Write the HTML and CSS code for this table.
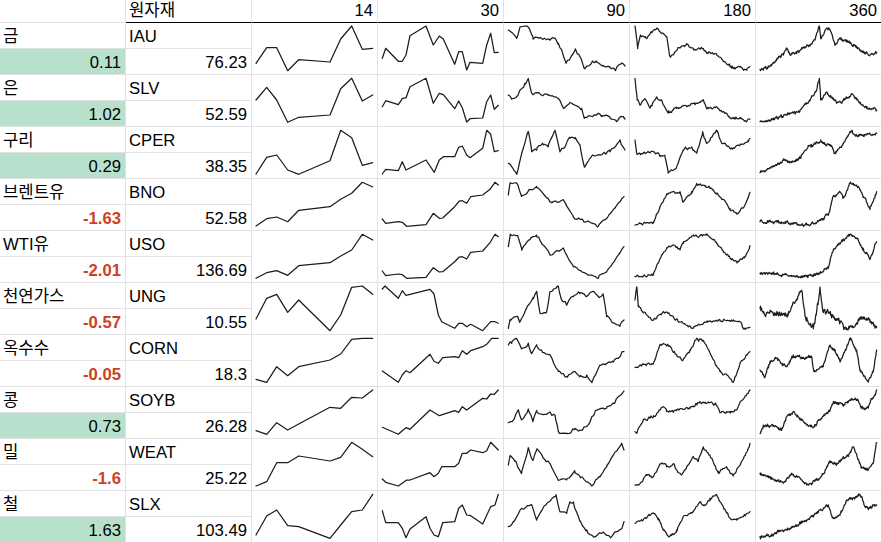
FILE: index.html
```html
<!DOCTYPE html>
<html lang="ko">
<head>
<meta charset="utf-8">
<title>원자재</title>
<link rel="stylesheet" href="styles.css">
</head>
<body>
<div class="sheet">
  <div class="cell hd"></div>
  <div class="cell hd top">원자재</div>
  <div class="cell hd top num">14</div>
  <div class="cell hd top num">30</div>
  <div class="cell hd top num">90</div>
  <div class="cell hd top num">180</div>
  <div class="cell hd top num end">360</div>

  <div class="cell">금</div>
  <div class="cell">IAU</div>
  <div class="cell spark"><svg viewBox="0 0 125 51"><polyline points="4,40.3 14.7,24.7 24.7,24.7 35.7,47.7 46.7,36.7 78,39 88.7,16 99.7,3 110.3,26.3 120.7,25.3"/></svg></div>
  <div class="cell spark"><svg viewBox="0 0 125 51"><polyline points="4.3,35.3 7.7,25.3 20.3,38.3 24.3,38.3 28,32 32,12.7 48,3 55.3,22 61.3,13 65.3,16 76.7,41.3 80.7,28.7 84.3,28.7 88.7,47 92,39.3 104.7,40.3 108.7,22 112.7,10.3 116.3,29.7 120.3,29.3"/></svg></div>
  <div class="cell spark"><svg viewBox="0 0 125 51"><polyline data-n="62" data-key="4.3,7 7.7,9.7 12.7,15.3 16,4.3 21,3 25.3,5.3 28.7,13.7 33,14.3 46,17 51,15.3 54.3,20.3 57.7,27 62,40.3 71,27 76,33.7 80.3,45.3 86,42 92.7,38.7 99.3,42 106,45 111,47 117.7,39.7 121,43"/></svg></div>
  <div class="cell spark"><svg viewBox="0 0 125 51"><polyline data-n="124" data-key="5,3 7.7,25.3 10,13.7 16.7,15.3 21.7,8.7 26.7,5.3 31.7,10.3 36.7,13.7 40,33.7 46.7,27 56.7,20.3 65,27 73.3,25.3 76.7,30.3 86.7,32 93.3,38.7 101.7,45.3 110,43.7 116.7,47 120,43.7"/></svg></div>
  <div class="cell spark end"><svg viewBox="0 0 125 51"><polyline data-n="250" data-key="4,46.3 10.7,45.3 20.7,37 27.3,30.3 30.7,25.3 34,32 40.7,28.7 54,22 59,17 63.3,3 64.7,15.3 70.7,5.3 74,7 79,22 84,15.3 94,20.3 100.7,23.7 107.3,28.7 114,32 120.7,29.7"/></svg></div>
  <div class="cell num up">0.11</div>
  <div class="cell num">76.23</div>

  <div class="cell">은</div>
  <div class="cell">SLV</div>
  <div class="cell spark"><svg viewBox="0 0 125 51"><polyline points="4,25 14.7,12.3 24.7,25 35.7,47.3 46.7,42.3 78,40 88.7,13.7 99.7,3.3 110.3,26 120.7,20"/></svg></div>
  <div class="cell spark"><svg viewBox="0 0 125 51"><polyline points="4.3,31.7 7.7,25.7 20.3,29.7 24.3,23.7 28,22.7 32,11.7 48,3.3 55.3,28.3 61.3,18.3 65.3,19.7 76.7,33.7 80.7,26 84.3,32.7 88.7,47 92,43.7 104.7,43 108.7,26.7 112.7,20 116.3,34.3 120.3,30.3"/></svg></div>
  <div class="cell spark"><svg viewBox="0 0 125 51"><polyline data-n="62" data-key="4.3,20 7.7,24.3 12.7,21.7 16,15 21,8.3 24.3,3.3 27.7,18.3 34.3,17.7 44.3,20 54.3,23.3 59.3,33.3 66,27.7 77.7,33.3 80.3,43.3 92.7,40 97.7,41.7 106,43.3 112.7,46.7 117.7,41.7 121,44"/></svg></div>
  <div class="cell spark"><svg viewBox="0 0 125 51"><polyline data-n="124" data-key="5,3.3 7.3,25 10,30 15,23.3 20,33.3 26.7,21.7 31.7,25 38.3,38.3 46.7,33.3 56.7,31.7 65,30 73.3,25 76.7,33.3 86.7,31.7 93.3,36.7 101.7,43.3 110,43.3 116.7,46.7 120,44.3"/></svg></div>
  <div class="cell spark end"><svg viewBox="0 0 125 51"><polyline data-n="250" data-key="4,46.7 17.3,44.3 30.7,40 44,35 54,25 60.7,15 63.3,3.3 64.7,25 70.7,16.7 74,21.7 80.7,28.3 87.3,25 97.3,20 104,28.3 110.7,33.3 120.7,35"/></svg></div>
  <div class="cell num up">1.02</div>
  <div class="cell num">52.59</div>

  <div class="cell">구리</div>
  <div class="cell">CPER</div>
  <div class="cell spark"><svg viewBox="0 0 125 51"><polyline points="4,47 14.7,30.3 24.7,28 35.7,43 46.7,47.3 78,33.7 88.7,3.3 99.7,10.7 110.3,38.3 120.7,35.7"/></svg></div>
  <div class="cell spark"><svg viewBox="0 0 125 51"><polyline points="4.3,47 7.7,42.3 20.3,43.7 24.3,34.7 28,43 48,33 56.3,45.3 61.3,33 65.3,29.7 76.7,29.7 80.7,20.3 84.3,19 88.7,28 92,30.7 104.7,21.3 108.7,3.3 112.7,7.3 116.3,24.7 120.3,23.7"/></svg></div>
  <div class="cell spark"><svg viewBox="0 0 125 51"><polyline data-n="62" data-key="4.3,36.3 7.7,39.7 12.7,47 17.7,26.3 24.3,4.7 27.7,24.7 32.7,23 39.3,18 44.3,19.7 51,3 56,24.7 61,19.7 66,11.3 71,11.3 76,18 80.3,39.7 86,31.3 96,28 106,24.7 116,13 121,23"/></svg></div>
  <div class="cell spark"><svg viewBox="0 0 125 51"><polyline data-n="124" data-key="5,13 6.7,26.3 13.3,26.3 23.3,24.7 30,29.7 35,29.7 38.3,46.3 46.7,39.7 53.3,23 61.7,19.7 66.7,26.3 72.7,4.7 76.7,16.3 86.7,4.7 91.7,16.3 100,21.3 110,18 118.3,14.7 120,11.3"/></svg></div>
  <div class="cell spark end"><svg viewBox="0 0 125 51"><polyline data-n="250" data-key="4,45.7 10.7,43 20.7,38 27.3,33 37.3,34.7 45.7,28 54,18 64,14.7 74,18 79,26.3 87.3,16.3 95.3,4.7 102,9.7 110.3,8 120.7,6.3"/></svg></div>
  <div class="cell num up">0.29</div>
  <div class="cell num">38.35</div>

  <div class="cell">브렌트유</div>
  <div class="cell">BNO</div>
  <div class="cell spark"><svg viewBox="0 0 125 51"><polyline points="4,47 14.7,39.7 24.7,38 35.7,42.7 46.7,31.3 78,27.7 88.7,20.3 99.7,14.3 110.3,3.3 120.7,8"/></svg></div>
  <div class="cell spark"><svg viewBox="0 0 125 51"><polyline points="4.3,40 7.7,44.3 20.3,42.7 24.3,43.3 28.7,47.3 48,45.7 55.3,34.3 61.3,39.3 64.7,39 76.7,27.7 81.3,22 84.3,21.7 88.7,24.3 92.7,17.7 104.7,16 112,10.3 117,3.3 120.3,6"/></svg></div>
  <div class="cell spark"><svg viewBox="0 0 125 51"><polyline data-n="62" data-key="4.3,16 6,4.3 12.7,3.7 17.7,17 26,11 32.7,7.7 46,22.7 59.3,21 69.3,37.7 82.7,42.7 94.3,47 102.7,39.3 111,29.3 120,17.7"/></svg></div>
  <div class="cell spark"><svg viewBox="0 0 125 51"><polyline data-n="124" data-key="5,46 23.3,42.7 31.7,24.3 36.7,16 43.3,12.7 50,12.7 53.3,22.7 61.7,12.7 66.7,4.3 73.3,6 80,9.3 86.7,14.3 100,29.3 106.7,33.7 115,26 120,13.3"/></svg></div>
  <div class="cell spark end"><svg viewBox="0 0 125 51"><polyline data-n="250" data-key="4,42.7 20.7,42.7 37.3,45.3 50.7,46 64,41 72.3,36 77.3,17.7 84,12.7 87.3,19 94,3.7 102.3,7.7 107.3,17.7 114,30.3 120.7,12.7"/></svg></div>
  <div class="cell num down">-1.63</div>
  <div class="cell num">52.58</div>

  <div class="cell">WTI유</div>
  <div class="cell">USO</div>
  <div class="cell spark"><svg viewBox="0 0 125 51"><polyline points="4,47.3 14.7,41.7 24.7,39.7 35.7,44.3 46.7,34.7 78,31.7 88.7,25 99.7,19 110.3,3.3 120.7,9"/></svg></div>
  <div class="cell spark"><svg viewBox="0 0 125 51"><polyline points="4.3,40 7.7,44.7 20.3,43 24.3,43.7 28.7,47.3 48,46.3 55.3,36.7 61.3,41 64.7,40.7 76.7,30.7 81.3,26 84.3,25.7 88.7,28 92.7,21.3 104.7,20 112,11.7 117,3.3 120.3,5.7"/></svg></div>
  <div class="cell spark"><svg viewBox="0 0 125 51"><polyline data-n="62" data-key="4.3,15.7 6,5.7 14.3,6.3 17.7,19 26,9 32.7,4 46,24 59.3,17.3 69.3,35.7 82.7,43 94.3,46.7 102.7,40.7 111,29 120,15.7"/></svg></div>
  <div class="cell spark"><svg viewBox="0 0 125 51"><polyline data-n="124" data-key="5,45.7 23.3,44 31.7,24 36.7,17.3 43.3,14 50,19 53.3,12.3 63.3,4 76.7,4 86.7,12.3 100,27.3 106.7,30.7 115,25.7 120,14.7"/></svg></div>
  <div class="cell spark end"><svg viewBox="0 0 125 51"><polyline data-n="250" data-key="4,42.3 20.7,43.3 37.3,44.7 50.7,45.7 64,41.7 72.3,37.3 77.3,19 84,12.3 94,4 102.3,9 107.3,17.3 114,28.3 120.7,10.7"/></svg></div>
  <div class="cell num down">-2.01</div>
  <div class="cell num">136.69</div>

  <div class="cell">천연가스</div>
  <div class="cell">UNG</div>
  <div class="cell spark"><svg viewBox="0 0 125 51"><polyline points="4,36 14.7,15.3 24.7,11.3 35.7,29.3 46.7,17 78,47.7 88.7,32 99.7,4.3 110.3,3 120.7,11.3"/></svg></div>
  <div class="cell spark"><svg viewBox="0 0 125 51"><polyline points="4.3,6 7,3 20.3,15.3 24.3,7.7 28,12.3 52,6.3 56,11 60.3,32 63.7,38.7 76.7,45.3 80.7,40.3 84.3,40.3 88.7,43.7 92.7,41.3 104.7,47.7 112.7,38.7 117,38.7 120.3,40.3"/></svg></div>
  <div class="cell spark"><svg viewBox="0 0 125 51"><polyline data-n="62" data-key="4.3,45.3 6,37 12.7,33.7 16,38.7 22.7,25.3 29.3,15.3 32.7,8.7 36,30.3 42.7,28.7 46,8.7 54.3,3.7 57.7,17 62.7,22 69.3,13.7 76,10.3 82.7,13.7 87.7,8.7 96,13.7 99.3,12 102.7,33.7 107.7,38.7 116,43.7 120,37"/></svg></div>
  <div class="cell spark"><svg viewBox="0 0 125 51"><polyline data-n="124" data-key="5,17 6.7,3.7 8.3,23.7 13.3,30.3 23.3,37 33.3,28.7 43.3,33.7 53.3,40.3 63.3,45.3 76.7,38.7 90,37 103.3,37 110,38.7 113.3,45.3 120,44.3"/></svg></div>
  <div class="cell spark end"><svg viewBox="0 0 125 51"><polyline data-n="250" data-amp="2.4" data-key="4,25.3 10.7,30.3 20.7,28.7 30.7,32 40.7,17 45.7,7 49,33.7 57.3,45.3 62.3,18.7 64,3.7 66.7,27 77.3,33.7 90.7,45.3 104,37 114,37 119,45.3 120.7,44.3"/></svg></div>
  <div class="cell num down">-0.57</div>
  <div class="cell num">10.55</div>

  <div class="cell">옥수수</div>
  <div class="cell">CORN</div>
  <div class="cell spark"><svg viewBox="0 0 125 51"><polyline points="4,44.3 14.7,47.3 24.7,31.7 35.7,40.7 46.7,31.7 78,25 88.7,19 99.7,4.3 110.3,3.3 120.7,3.3"/></svg></div>
  <div class="cell spark"><svg viewBox="0 0 125 51"><polyline points="4.3,36 20.3,47.3 24.3,40 28,35.7 32,37.7 52,19.3 56,26.3 60.3,28.3 64.7,22.7 76.7,21.7 80.7,22.7 84.3,15.7 88.7,19.3 92.7,15.7 104.7,11.7 108.7,9.3 113.7,3.3 120.3,3.3"/></svg></div>
  <div class="cell spark"><svg viewBox="0 0 125 51"><polyline data-n="62" data-key="4.3,10 7.7,8.3 12.7,3.3 17.7,13.3 24.3,8.3 27.7,18.3 32.7,10 37.7,15 46,20 54.3,36.7 62.7,41.7 71,36.7 76,41.7 82.7,40 87.7,46.7 96,30 109.3,26.7 120,16.7"/></svg></div>
  <div class="cell spark"><svg viewBox="0 0 125 51"><polyline data-n="124" data-key="5,32.3 16.7,29 23.3,28.3 29.3,11.7 33.3,8.3 40,11.7 46.7,20 52.7,25.7 60,15 66.7,3.3 73.3,5 80,18.3 90,36.7 96.7,40 103.3,46.7 110,28.3 120,16.7"/></svg></div>
  <div class="cell spark end"><svg viewBox="0 0 125 51"><polyline data-n="250" data-key="4,35 9,41.7 14,26.7 20.7,23.3 30.7,31.7 37.3,20 47.3,23.3 55.7,21.7 58,36.7 67.3,31.7 74,10 79,15 84,26.7 94,3.3 100.7,15 104,35 112.3,46.7 117.3,35 120.7,15"/></svg></div>
  <div class="cell num down">-0.05</div>
  <div class="cell num">18.3</div>

  <div class="cell">콩</div>
  <div class="cell">SOYB</div>
  <div class="cell spark"><svg viewBox="0 0 125 51"><polyline points="4,43.7 14.7,47.3 24.7,35.7 35.7,43 46.7,37 78,20.3 88.7,21.3 99.7,10.3 110.3,11 120.7,3"/></svg></div>
  <div class="cell spark"><svg viewBox="0 0 125 51"><polyline points="4.3,40.3 20.3,47.3 24.3,43.7 28,40.7 32,42.3 52,23 61.3,28.7 76.7,23.7 80.7,25.3 84.3,19.7 88.7,23 104.7,11.3 108.7,12 112.7,7 116.3,7.3 120.3,3"/></svg></div>
  <div class="cell spark"><svg viewBox="0 0 125 51"><polyline data-n="62" data-key="4.3,35.7 9.3,33 14.3,23 17.7,33 24.3,22 29.3,33 32.7,23 39.3,28 46,24.7 51,28 54.3,44.7 62.7,46.3 71,41.3 76,43 82.7,39.7 92.7,23 102.7,21.3 109.3,16.3 120,4"/></svg></div>
  <div class="cell spark"><svg viewBox="0 0 125 51"><polyline data-n="124" data-key="5,44.7 6.7,46.3 13.3,33 23.3,29.7 33.3,19.7 36.7,24.7 46.7,23 60,21.3 70,14.7 78.3,14.7 86.7,18 90,25.7 100,24.7 106.7,23 110,14.7 120,3"/></svg></div>
  <div class="cell spark end"><svg viewBox="0 0 125 51"><polyline data-n="250" data-key="4,46.3 7.3,38 17.3,38 25.7,43 30.7,29.7 37.3,24.7 44,31.3 50.7,38 57.3,39.7 64,33 74,23 77.3,14.7 87.3,18 95.3,11.3 102,13 105.3,21.3 112,19.7 120.7,3"/></svg></div>
  <div class="cell num up">0.73</div>
  <div class="cell num">26.28</div>

  <div class="cell">밀</div>
  <div class="cell">WEAT</div>
  <div class="cell spark"><svg viewBox="0 0 125 51"><polyline points="4,47 14.7,42.7 24.7,23.7 35.7,23.7 46.7,17 78,22 88.7,18.3 99.7,3.3 110.3,10.3 120.7,17.7"/></svg></div>
  <div class="cell spark"><svg viewBox="0 0 125 51"><polyline points="4.3,40 7.7,43.3 20.3,47 28.7,41 32,41 52,33.7 56,37.7 60.3,34.3 63.7,27.7 76.7,27.7 80.7,24.3 84.3,14.3 88.7,14.3 92.7,11 104.7,13.7 108.7,11.7 112.7,3.3 120.3,11"/></svg></div>
  <div class="cell spark"><svg viewBox="0 0 125 51"><polyline data-n="62" data-key="4.3,26 6,17 11,22.7 17.7,32.7 24.3,8.3 28.3,21 32.7,11 39.3,19.3 46,24.3 54.3,41 62.7,41 71,33.7 76,37.7 87.7,47 96,37.7 102.7,27.7 111,12.7 117.7,4.3 120,11"/></svg></div>
  <div class="cell spark"><svg viewBox="0 0 125 51"><polyline data-n="124" data-key="5,46 10,44.3 16.7,36 23.3,37.7 30,24.3 36.7,27.7 43.3,24.3 51.7,36 56.7,27.7 63.3,17.7 68.3,22.7 73.3,7.7 80,16 88.3,32.7 96.7,27.7 103.3,36 110,26 118.3,9.3 120,4.3"/></svg></div>
  <div class="cell spark end"><svg viewBox="0 0 125 51"><polyline data-n="250" data-key="4,34.3 14,37.7 27.3,44.3 35.7,34.3 44,39.3 50.7,46 64,39.3 74,22.7 80.7,24.3 87.3,19.3 92.3,17.7 97.3,7.7 105.3,27.7 112.3,31 117.3,24.3 120.7,3.7"/></svg></div>
  <div class="cell num down">-1.6</div>
  <div class="cell num">25.22</div>

  <div class="cell">철</div>
  <div class="cell">SLX</div>
  <div class="cell spark"><svg viewBox="0 0 125 51"><polyline points="4,44 14.7,25 24.7,19 35.7,34.7 46.7,35.7 78,47.3 88.7,34 99.7,20.7 110.3,19 120.7,3.3"/></svg></div>
  <div class="cell spark"><svg viewBox="0 0 125 51"><polyline points="4.3,19.7 7.7,31.7 20.3,31.7 24.3,37.3 28,46.7 32,38 48,25.7 52,37.3 56,44 60.3,45.7 64.7,31.7 76.7,30.7 80.7,17.3 84.3,14 88.7,24 92.7,24.7 104.7,33 112.7,15.7 117,14 120.3,3.3"/></svg></div>
  <div class="cell spark"><svg viewBox="0 0 125 51"><polyline data-n="62" data-key="4.3,35.7 9.3,30.7 16,19 22.7,15.7 27.7,14 32.7,29 42.7,12.3 52,3.3 56,20.7 62.7,22.3 66,10.7 69.3,10.7 76,30.7 82.7,39 89.3,45.7 99.3,40.7 106,45.7 117.7,37.3 120,30.7"/></svg></div>
  <div class="cell spark"><svg viewBox="0 0 125 51"><polyline data-n="124" data-key="5,32.3 13.3,29 23.3,22.3 28.3,29 33.3,39 40,45.7 46.7,39 53.3,25.7 63.3,20.7 70,10.7 75,14 80,7.3 86.7,4 93.3,15.7 100,27.3 106.7,29 120,20.7"/></svg></div>
  <div class="cell spark end"><svg viewBox="0 0 125 51"><polyline data-n="250" data-key="4,45.7 20.7,42.3 37.3,35.7 50.7,29 64,19 72.3,14 77.3,27.3 84,24 90.7,9 97.3,7.3 104,4 109,15.7 114,17.3 120.7,14"/></svg></div>
  <div class="cell num up">1.63</div>
  <div class="cell num">103.49</div>
</div>
<script src="script.js"></script>
</body>
</html>
```

FILE: styles.css
```css
html, body {
  margin: 0;
  padding: 0;
  background: #ffffff;
}

body {
  font-family: "Liberation Sans", "Noto Sans CJK KR", Arial, sans-serif;
  font-size: 16.7px;
  color: #000000;
}

.sheet {
  display: grid;
  grid-template-columns: repeat(6, 126px) 125px;
  grid-template-rows: 23px;
  grid-auto-rows: 26px;
  width: 881px;
  height: 542px;
  overflow: hidden;
}

.cell {
  box-sizing: border-box;
  border-right: 1px solid #e2e2e2;
  border-bottom: 1px solid #e2e2e2;
  display: flex;
  align-items: flex-end;
  padding: 0 3px 2px 3px;
  line-height: 19px;
  white-space: nowrap;
  overflow: hidden;
}

.cell.end {
  border-right: none;
}

.hd.top {
  border-bottom-color: #000000;
}

.num {
  justify-content: flex-end;
  padding-right: 4px;
}

.up {
  background: #b7e1cd;
}

.down {
  color: #cc4125;
  font-weight: bold;
}

.spark {
  grid-row: span 2;
  padding: 0;
  align-items: flex-start;
}

.spark svg {
  display: block;
  width: 125px;
  height: 51px;
  flex: none;
}

.spark polyline {
  fill: none;
  stroke: #1c1c1c;
  stroke-width: 1.25;
  stroke-linejoin: round;
  stroke-linecap: round;
}
```

FILE: script.js
```js
(function () {
  function rng(seed) {
    return function () {
      seed |= 0;
      seed = (seed + 0x6d2b79f5) | 0;
      var t = Math.imul(seed ^ (seed >>> 15), 1 | seed);
      t = (t + Math.imul(t ^ (t >>> 7), 61 | t)) ^ t;
      return ((t ^ (t >>> 14)) >>> 0) / 4294967296;
    };
  }
  var lines = document.querySelectorAll('polyline[data-key]');
  lines.forEach(function (pl, idx) {
    var key = pl.getAttribute('data-key').trim().split(/\s+/).map(function (p) {
      return p.split(',').map(Number);
    });
    var n = +pl.getAttribute('data-n');
    var amp = pl.getAttribute('data-amp') ? +pl.getAttribute('data-amp') : (n < 100 ? 1.5 : 1.3);
    var r = rng(idx * 7919 + 131);
    var x0 = key[0][0], x1 = key[key.length - 1][0];
    var step = (x1 - x0) / (n - 1);
    var pts = [];
    for (var s = 0; s < key.length - 1; s++) {
      var a = key[s], b = key[s + 1];
      pts.push([a[0], a[1], true]);
      var k0 = Math.floor((a[0] - x0) / step) + 1;
      for (var k = k0; x0 + k * step < b[0] - 0.05; k++) {
        var x = x0 + k * step;
        if (x <= a[0] + 0.05) continue;
        var t = (x - a[0]) / (b[0] - a[0]);
        pts.push([x, a[1] + (b[1] - a[1]) * t, false]);
      }
    }
    var last = key[key.length - 1];
    pts.push([last[0], last[1], true]);
    var walk = 0;
    var out = pts.map(function (p, i) {
      var y = p[1];
      walk = walk * 0.75 + (r() - 0.5) * amp * 1.3;
      if (!p[2]) y += walk + (r() - 0.5) * 2 * amp * 0.7;
      else if (i > 0 && i < pts.length - 1) y += (r() - 0.5) * amp * 0.5;
      y = Math.max(3, Math.min(48, y));
      return p[0].toFixed(1) + ',' + y.toFixed(1);
    });
    pl.setAttribute('points', out.join(' '));
  });
})();
```
